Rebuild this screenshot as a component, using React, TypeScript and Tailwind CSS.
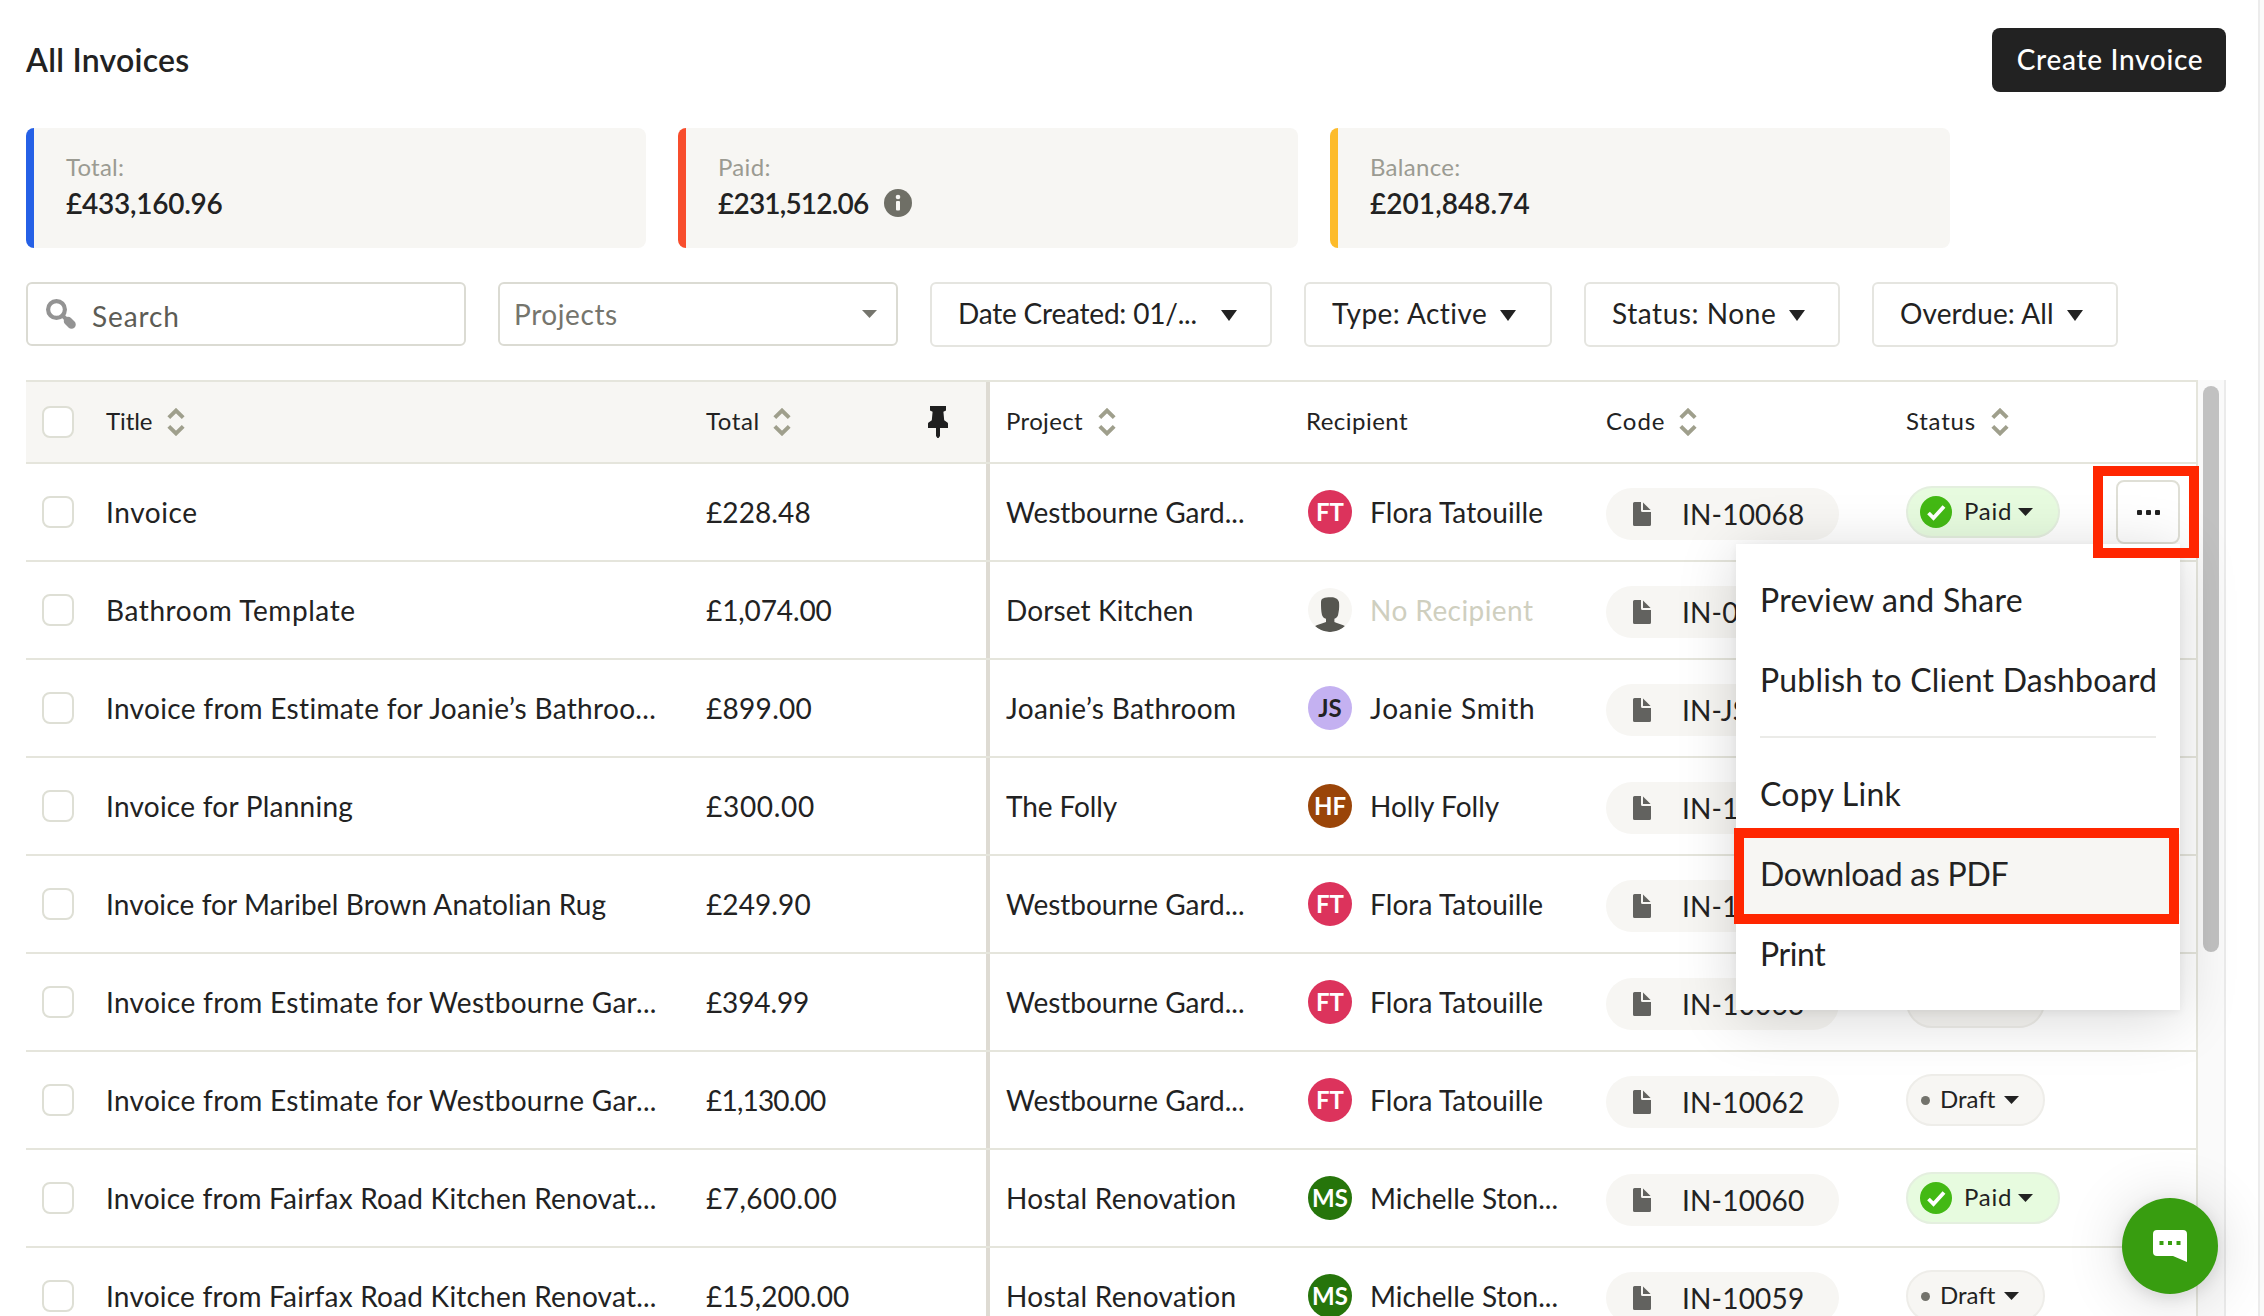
import React from "react";
import clsx from "clsx";

type Person = { initials?: string; name: string; color: string; track: string };

type Invoice = {
  title: string;
  titleTrack: string;
  total: string;
  totalTrack: string;
  project: string;
  projectTrack: string;
  person: Person;
  code: string;
  status: "paid" | "draft";
};

const flora: Person = { initials: "FT", name: "Flora Tatouille", color: "bg-[#dc335c] text-white", track: "tracking-[0.1px]" };
const michelle: Person = { initials: "MS", name: "Michelle Ston...", color: "bg-[#26750b] text-white", track: "tracking-[0.05px]" };
const joanie: Person = { initials: "JS", name: "Joanie Smith", color: "bg-[#c4b1f1] text-[#222]", track: "tracking-[0.81px]" };
const holly: Person = { initials: "HF", name: "Holly Folly", color: "bg-[#9a4509] text-white", track: "tracking-[0.02px]" };
const nobody: Person = { name: "No Recipient", color: "bg-[#f7f6f3]", track: "tracking-[0.44px] text-[#cfcfbf]" };

const westbourne = { project: "Westbourne Gard...", projectTrack: "tracking-[-0.01px]" };
const hostal = { project: "Hostal Renovation", projectTrack: "tracking-[0.3px]" };

const invoices: Invoice[] = [
  { title: "Invoice", titleTrack: "tracking-[0.6px]", total: "£228.48", totalTrack: "tracking-[0.1px]", ...westbourne, person: flora, code: "IN-10068", status: "paid" },
  { title: "Bathroom Template", titleTrack: "tracking-[0.58px]", total: "£1,074.00", totalTrack: "tracking-[-0.1px]", project: "Dorset Kitchen", projectTrack: "tracking-[0.13px]", person: nobody, code: "IN-00001", status: "draft" },
  { title: "Invoice from Estimate for Joanie’s Bathroo...", titleTrack: "tracking-[0.32px]", total: "£899.00", totalTrack: "tracking-[0.3px]", project: "Joanie’s Bathroom", projectTrack: "tracking-[0.37px]", person: joanie, code: "IN-JS001", status: "draft" },
  { title: "Invoice for Planning", titleTrack: "tracking-[0.25px]", total: "£300.00", totalTrack: "tracking-[0.7px]", project: "The Folly", projectTrack: "tracking-[-0.1px]", person: holly, code: "IN-10066", status: "draft" },
  { title: "Invoice for Maribel Brown Anatolian Rug", titleTrack: "tracking-[0.12px]", total: "£249.90", totalTrack: "tracking-[0.1px]", ...westbourne, person: flora, code: "IN-10064", status: "draft" },
  { title: "Invoice from Estimate for Westbourne Gar...", titleTrack: "tracking-[0.3px]", total: "£394.99", totalTrack: "tracking-[-0.13px]", ...westbourne, person: flora, code: "IN-10063", status: "draft" },
  { title: "Invoice from Estimate for Westbourne Gar...", titleTrack: "tracking-[0.3px]", total: "£1,130.00", totalTrack: "tracking-[-0.8px]", ...westbourne, person: flora, code: "IN-10062", status: "draft" },
  { title: "Invoice from Fairfax Road Kitchen Renovat...", titleTrack: "tracking-[0.22px]", total: "£7,600.00", totalTrack: "tracking-[0.5px]", ...hostal, person: michelle, code: "IN-10060", status: "paid" },
  { title: "Invoice from Fairfax Road Kitchen Renovat...", titleTrack: "tracking-[0.22px]", total: "£15,200.00", totalTrack: "tracking-[0.04px]", ...hostal, person: michelle, code: "IN-10059", status: "draft" },
];

const gridCols = "grid grid-cols-[664px_300px_300px_300px_300px_306px]";

function Caret({ className }: { className: string }) {
  return (
    <svg viewBox="0 0 16 10" preserveAspectRatio="none" className={clsx("shrink-0", className)}>
      <path d="M0 0h16L8 10z" fill="currentColor" />
    </svg>
  );
}

function SortIcon() {
  return (
    <svg viewBox="0 0 18 28" className="h-7 w-[18px]" fill="none" stroke="#9f9f8c" strokeWidth="4">
      <path d="M1.8 9.6 9 2.6l7.2 7M1.8 18.4l7.2 7 7.2-7" />
    </svg>
  );
}

function PinIcon() {
  return (
    <svg viewBox="0 0 20 32" className="h-8 w-5 text-[#1f1f1f]" fill="currentColor">
      <path d="M2 0h16v4.4l-2.6 1.4.8 8.4 3.2 2.2c.4.3.6.8.6 1.3V22h-8v8L10.600 32H9.400L8 30v-8H0v-4.300c0-.5.2-1 .6-1.300l3.200-2.200.8-8.400L2 4.400z" />
    </svg>
  );
}

function SearchIcon() {
  return (
    <svg viewBox="0 0 30 30" className="size-[30px] shrink-0" fill="none" stroke="#939393">
      <circle cx="10.500" cy="10.500" r="8.400" strokeWidth="4.200" />
      <path d="M16.500 16.500 20 20" strokeWidth="4" />
      <path d="M22 22 25.500 25.500" strokeWidth="8.500" strokeLinecap="round" />
    </svg>
  );
}

function InfoIcon() {
  return (
    <svg viewBox="0 0 28 28" className="size-7">
      <circle cx="14" cy="14" r="14" fill="#6f6f66" />
      <circle cx="14" cy="8" r="2.300" fill="#f7f6f3" />
      <rect x="12" y="12" width="4" height="9.500" rx="1" fill="#f7f6f3" />
    </svg>
  );
}

function FileIcon() {
  return (
    <svg viewBox="0 0 18 24" className="h-6 w-[18px] shrink-0" fill="#62625f">
      <path d="M1.500 0H8v8.500A1.500 1.500 0 0 0 9.500 10H18v12.500a1.500 1.500 0 0 1-1.500 1.500h-15A1.500 1.500 0 0 1 0 22.500v-21A1.500 1.500 0 0 1 1.500 0z" />
      <path d="M10 .4 17.600 8H10z" />
    </svg>
  );
}

function PersonIcon() {
  return (
    <svg viewBox="0 0 44 44" className="size-11" fill="#565650">
      <path d="M13 15c0-2.600.4-4 2-4.400C17 9 20 9.400 22 9.200c4-.4 8 .8 9 5 .4 4 .2 8-1 13-.6 2-2 3-3.600 3.600V34c3 1.600 7.600 2.200 11 4.300A22 22 0 0 1 22 44 22 22 0 0 1 6.600 38.300C10 36.200 14.600 35.600 18 34v-3.200c-2-.6-3.400-1.800-4-3.800-1-4-1-8-1-12z" />
    </svg>
  );
}

function CheckIcon() {
  return (
    <svg viewBox="0 0 32 32" className="size-8 shrink-0">
      <circle cx="16" cy="16" r="16" fill="#43b914" />
      <path d="m8.500 17 5 5L24 10.500" fill="none" stroke="#fff" strokeWidth="3.800" />
    </svg>
  );
}

function Checkbox() {
  return <span className="size-8 rounded-lg border-2 border-[#dedfd5] bg-white" />;
}

function SummaryCard({ label, labelTrack, amount, amountTrack, accent, info }: { label: string; labelTrack: string; amount: string; amountTrack: string; accent: string; info?: boolean }) {
  return (
    <div className={clsx("flex h-[120px] w-[620px] flex-col overflow-hidden rounded-lg border-l-8 bg-[#f7f6f3] pt-[25px] pl-8", accent)}>
      <div className={clsx("h-[34px] text-[24px] leading-7 text-[#9b9b92]", labelTrack)}>{label}</div>
      <div className="flex items-center gap-4">
        <span className={clsx("text-[28px] leading-8 font-semibold", amountTrack)}>{amount}</span>
        {info && <InfoIcon />}
      </div>
    </div>
  );
}

function FilterButton({ label, className, gap }: { label: string; className: string; gap: string }) {
  return (
    <button className={clsx("flex h-[65px] items-center rounded-md border-2 border-[#e5e5e0] bg-white pb-[3px] pl-[26px] text-left text-[28px]", className)}>
      <span>{label}</span>
      <Caret className={clsx("mt-1 h-[11px] w-4", gap)} />
    </button>
  );
}

function HeaderCell({ label, track, sortable = true, gap = "gap-[15px]" }: { label: string; track: string; sortable?: boolean; gap?: string }) {
  return (
    <div className={clsx("flex items-center pl-4 text-[24px]", gap)}>
      <span className={clsx("pb-0.5", track)}>{label}</span>
      {sortable && <SortIcon />}
    </div>
  );
}

function StatusPill({ status }: { status: Invoice["status"] }) {
  if (status === "paid") {
    return (
      <span className="flex h-[52px] w-[154px] items-center rounded-full border-2 border-[#e4efdf] bg-[#e7fbdf] pl-3 text-[24px]">
        <CheckIcon />
        <span className="ml-3 pb-0.5 tracking-[0.76px]">Paid</span>
        <Caret className="ml-[6px] h-2 w-[15px]" />
      </span>
    );
  }
  return (
    <span className="flex h-[52px] w-[139px] items-center rounded-full border-2 border-[#eeede9] bg-[#f7f6f3] pl-[13px] text-[24px]">
      <span className="size-[9px] rounded-full bg-[#73736c]" />
      <span className="ml-2.5 pb-0.5 tracking-[0.03px]">Draft</span>
      <Caret className="ml-[9px] h-2 w-[15px]" />
    </span>
  );
}

function ActionMenu() {
  return (
    <div className="absolute top-full right-0 z-10 w-[444px] bg-white py-4 text-[32px] shadow-[0_8px_56px_rgba(0,0,0,0.16),0_2px_8px_rgba(0,0,0,0.06)]">
      <div className="flex h-20 items-center px-6 tracking-[0.25px]">Preview and Share</div>
      <div className="flex h-20 items-center px-6 tracking-[0.23px] whitespace-nowrap">Publish to Client Dashboard</div>
      <div className="mx-6 my-4 h-0.5 bg-[#ebebe8]" />
      <div className="flex h-20 items-center px-6 tracking-[0.25px]">Copy Link</div>
      <div className="relative flex h-20 items-center bg-[#f7f6f3] px-6 tracking-[-0.27px]">
        Download as PDF
        <span className="absolute -top-[6px] right-[1px] -bottom-[10px] -left-0.5 border-[10px] border-[#ff2600]" />
      </div>
      <div className="flex h-20 items-center px-6 tracking-[-0.4px]">Print</div>
    </div>
  );
}

function InvoiceRow({ invoice, menuOpen }: { invoice: Invoice; menuOpen: boolean }) {
  const { person } = invoice;
  return (
    <div className={clsx(gridCols, "h-[98px] border-r-2 border-b-2 border-[#e5e5dc] text-[28px] whitespace-nowrap")}>
      <div className="flex items-center pl-4">
        <Checkbox />
        <span className={clsx("ml-8", invoice.titleTrack)}>{invoice.title}</span>
      </div>
      <div className="flex items-center border-r-4 border-[#dedbd3] pl-4">
        <span className={invoice.totalTrack}>{invoice.total}</span>
      </div>
      <div className="flex items-center pl-4">
        <span className={invoice.projectTrack}>{invoice.project}</span>
      </div>
      <div className="flex items-center gap-[18px] pl-[18px]">
        <span className={clsx("flex size-11 items-center justify-center overflow-hidden rounded-full text-[24px] font-bold", person.color)}>
          {person.initials ?? <PersonIcon />}
        </span>
        <span className={person.track}>{person.name}</span>
      </div>
      <div className="flex items-center pt-1 pl-4">
        <span className="flex h-[52px] items-center gap-[31px] rounded-full bg-[#f7f6f3] pr-[35px] pl-[27px]">
          <FileIcon />
          <span className="tracking-[0.2px]">{invoice.code}</span>
        </span>
      </div>
      <div className="flex items-center justify-between px-4">
        <StatusPill status={invoice.status} />
        {menuOpen && (
          <div className="relative z-10 shrink-0">
            <button className="flex size-16 items-center justify-center gap-1 rounded-lg border-2 border-[#dfdfd6] bg-white">
              <span className="size-[5px] rounded-[1px] bg-[#222]" />
              <span className="size-[5px] rounded-[1px] bg-[#222]" />
              <span className="size-[5px] rounded-[1px] bg-[#222]" />
            </button>
            <ActionMenu />
            <span className="absolute -top-3.5 -right-[19px] z-20 h-[92px] w-[106px] border-[10px] border-[#ff2600]" />
          </div>
        )}
      </div>
    </div>
  );
}

export default function App() {
  return (
    <div className="relative flex h-[1316px] w-[2264px] overflow-hidden bg-white font-[Lato,sans-serif] text-[#222] [font-variant-ligatures:none]">
      <main className="flex w-[2258px] shrink-0 flex-col pl-[26px]">
        <header className="mt-7 flex h-16 items-center justify-between pr-8">
          <h1 className="text-[32px] font-semibold tracking-[0.25px]">All Invoices</h1>
          <button className="h-16 w-[234px] rounded-lg bg-[#222] pb-0.5 pl-0.5 text-[28px] font-medium tracking-[0.7px] text-white">Create Invoice</button>
        </header>

        <section className="mt-9 flex gap-8">
          <SummaryCard label="Total:" labelTrack="tracking-[0.23px]" amount="£433,160.96" amountTrack="tracking-[-0.25px]" accent="border-[#2560e6]" />
          <SummaryCard label="Paid:" labelTrack="tracking-[0.31px]" amount="£231,512.06" amountTrack="tracking-[-0.8px]" accent="border-[#f84d2c]" info />
          <SummaryCard label="Balance:" labelTrack="tracking-[0.3px]" amount="£201,848.74" amountTrack="tracking-[0.05px]" accent="border-[#fdbb2a]" />
        </section>

        <section className="mt-[34px] flex gap-8">
          <div className="flex h-16 w-[440px] items-center rounded-md border-2 border-[#dbdbd3] pl-[18px] text-[28px] text-[#5c5c55]">
            <SearchIcon />
            <span className="ml-4 pt-1 tracking-[0.9px]">Search</span>
          </div>
          <div className="flex h-16 w-[400px] items-center justify-between rounded-md border-2 border-[#dbdbd3] pr-[19px] pl-3.5 text-[28px] text-[#75756d]">
            <span className="tracking-[0.58px]">Projects</span>
            <Caret className="h-2 w-[15px]" />
          </div>
          <FilterButton label="Date Created: 01/..." className="w-[342px] tracking-[-0.2px]" gap="ml-6" />
          <FilterButton label="Type: Active" className="w-[248px] tracking-[0.45px]" gap="ml-[13px]" />
          <FilterButton label="Status: None" className="w-64 tracking-[0.57px]" gap="ml-[13px]" />
          <FilterButton label="Overdue: All" className="w-[246px] tracking-[0.13px]" gap="ml-[13px]" />
        </section>

        <section className="mt-[33px] flex">
          <div className="w-[2172px]">
            <div className={clsx(gridCols, "h-[84px] border-y-2 border-r-2 border-[#e5e5dc]")}>
              <div className="flex items-center bg-[#f7f6f3] pl-4">
                <Checkbox />
                <div className="ml-4">
                  <HeaderCell label="Title" track="tracking-[-0.1px]" />
                </div>
              </div>
              <div className="flex items-center justify-between border-r-4 border-[#dedbd3] bg-[#f7f6f3] pr-[38px]">
                <HeaderCell label="Total" track="tracking-[0.56px]" gap="gap-[13px]" />
                <PinIcon />
              </div>
              <HeaderCell label="Project" track="tracking-[0.35px]" />
              <HeaderCell label="Recipient" track="tracking-[0.47px]" sortable={false} />
              <HeaderCell label="Code" track="tracking-[1px]" gap="gap-[13px]" />
              <HeaderCell label="Status" track="tracking-[0.77px]" />
            </div>
            {invoices.map((invoice, i) => (
              <InvoiceRow key={i} invoice={invoice} menuOpen={i === 0} />
            ))}
          </div>
          <div className="flex w-7 justify-center border-r-2 border-[#ebebeb] bg-[#fafafa] pt-[6px]">
            <div className="h-[566px] w-4 rounded-full bg-[#c1c1c1]" />
          </div>
        </section>
      </main>
      <div className="flex-1 border-l-2 border-[#ececec] bg-[#fafafa]" />

      <button className="absolute right-[46px] bottom-[22px] z-30 flex size-24 items-center justify-center rounded-full bg-[#389d10] shadow-[0_4px_60px_rgba(0,0,0,0.16),0_4px_16px_rgba(0,0,0,0.1)]">
        <svg viewBox="0 0 34 32" className="h-8 w-[34px]">
          <path d="M4 0h26a4 4 0 0 1 4 4v28l-14-6H4a4 4 0 0 1-4-4V4a4 4 0 0 1 4-4z" fill="#fff" />
          <path d="M6.500 11h4v4h-4zM15 11h4v4h-4zM23.500 11h4v4h-4z" fill="#389d10" />
        </svg>
      </button>
    </div>
  );
}
